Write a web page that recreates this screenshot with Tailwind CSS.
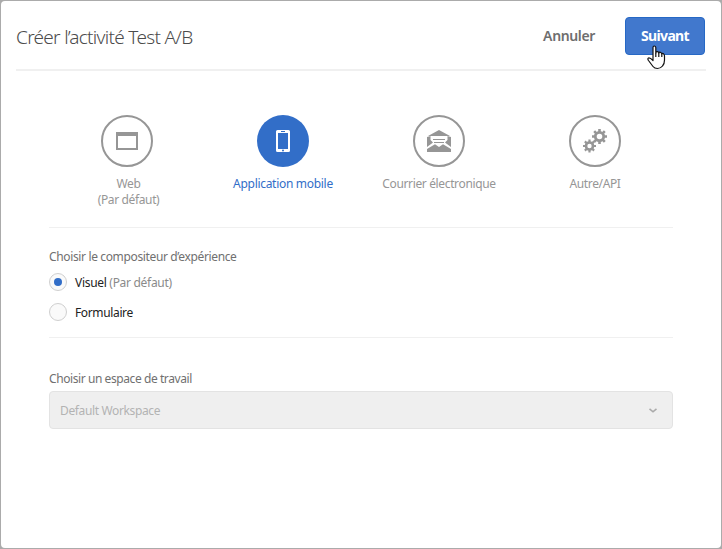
<!DOCTYPE html>
<html lang="fr">
<head>
<meta charset="utf-8">
<title>Créer l’activité Test A/B</title>
<script src="https://cdn.jsdelivr.net/npm/@tailwindcss/browser@4"></script>
</head>
<body class="h-[549px] w-[722px] overflow-hidden bg-[#ababab] p-px font-['Noto_Sans','Open_Sans',sans-serif] text-[12px] leading-4 tracking-[-0.36px] text-[#707070]">
<main class="relative h-[547px] w-[720px] rounded-[4px] bg-white">
  <header class="ml-[15px] flex h-[70px] w-[690px] items-center border-b-2 border-[#f0f0f0]">
    <h1 class="mt-[3px] text-[19px] leading-6 font-light tracking-[-0.7px] whitespace-nowrap text-[#4b4b4b]">Créer l’activité Test A/B</h1>
    <button class="mt-[2px] mr-[30px] ml-auto text-[14px] font-semibold text-[#6e6e6e]">Annuler</button>
    <button class="mt-[2px] mr-[1px] h-[38px] w-[80px] rounded-[4px] border border-[#2668c5] bg-[#4178cd] text-[14px] font-bold tracking-[-0.65px] text-white">Suivant</button>
  </header>
  <section class="mx-12 grid h-[157px] grid-cols-4 border-b border-[#f0f0f0] pt-11 text-center text-[#969696]">
    <div class="flex flex-col items-center">
      <div class="flex size-[52px] items-center justify-center rounded-full border-2 border-[#969696]">
        <svg class="h-[18px] w-[22px]" viewBox="0 0 22 18" fill="none"><path d="M1 2V17H21V2" stroke="#969696" stroke-width="2"/><path d="M0 0H22V4H0Z" fill="#969696"/></svg>
      </div>
      <p class="mt-[9px] ml-[3px]">Web<br>(Par défaut)</p>
    </div>
    <div class="flex flex-col items-center text-[#326ec8]">
      <div class="flex size-[52px] items-center justify-center rounded-full bg-[#326ec8]">
        <svg class="h-[22px] w-[14px]" viewBox="0 0 14 22"><path fill="#fff" fill-rule="evenodd" d="M1.5 0H12.5Q14 0 14 1.5V20.5Q14 22 12.5 22H1.5Q0 22 0 20.5V1.5Q0 0 1.5 0ZM2 3V19H12V3ZM5 1V2H9V1ZM7 19.5A1 1 0 1 0 7 21.5A1 1 0 1 0 7 19.5Z"/></svg>
      </div>
      <p class="mt-[9px] tracking-[-0.3px]">Application mobile</p>
    </div>
    <div class="flex flex-col items-center">
      <div class="flex size-[52px] items-center justify-center rounded-full border-2 border-[#969696]">
        <svg class="h-[22px] w-[24px]" viewBox="0 0 24 22"><path fill="#969696" d="M12 0L23 6H1ZM0 7L3.5 6V10L6 12.5L0 17ZM24 7L20.500 6V10L18 12.500L24 17ZM0 22V19L8 14.300L12 17L16 14.300L24 19V22Z"/><path d="M6 9.500H18M7 12.500H17" stroke="#969696"/></svg>
      </div>
      <p class="mt-[9px] whitespace-nowrap">Courrier électronique</p>
    </div>
    <div class="flex flex-col items-center">
      <div class="flex size-[52px] items-center justify-center rounded-full border-2 border-[#969696]">
        <svg class="size-6" viewBox="0 0 24 24" fill="none" stroke="#969696"><circle cx="16.500" cy="7.500" r="4.200" stroke-width="2.800"/><path stroke-width="2.600" d="M16.500 0V3M16.500 12V15M9 7.500H12M21 7.500H24M11.200 2.200L13.300 4.300M19.700 10.700L21.800 12.800M21.800 2.200L19.700 4.300M13.300 10.700L11.200 12.800"/><circle cx="6.500" cy="17" r="3.500" stroke-width="2.600"/><path stroke-width="2.200" d="M6.500 10.500V13M6.500 21V23.500M0 17H3M10 17H13M1.900 12.400L3.700 14.200M9.300 19.800L11.100 21.600M11.100 12.400L9.300 14.200M3.700 19.800L1.900 21.600"/></svg>
      </div>
      <p class="mt-[9px]">Autre/API</p>
    </div>
  </section>
  <section class="mx-12 h-[110px] border-b border-[#f0f0f0] pt-[21px]">
    <h2>Choisir le compositeur d’expérience</h2>
    <label class="mt-2 flex h-[18px] items-center text-[#222]"><span class="mr-2 flex size-[18px] items-center justify-center rounded-full border border-[#cfcfcf] bg-[#fafafa]"><span class="size-2 rounded-full bg-[#326ec8]"></span></span><span class="pt-[2px] tracking-[-0.3px]">Visuel <span class="text-[#8a8a8a]">(Par défaut)</span></span></label>
    <label class="mt-3 flex h-[18px] items-center text-[#222]"><span class="mr-2 size-[18px] rounded-full border border-[#cfcfcf] bg-[#fafafa]"></span><span class="pt-[2px]">Formulaire</span></label>
  </section>
  <section class="mx-12 pt-[33px]">
    <h2 class="tracking-[-0.42px]">Choisir un espace de travail</h2>
    <div class="mt-1 flex h-[38px] items-center justify-between rounded-[4px] border border-[#e3e3e3] bg-[#efefef] pr-[15px] pl-[10px] text-[#b3b3b3]"><span class="pt-[2px]">Default Workspace</span><svg class="h-[5px] w-[8px]" viewBox="0 0 8 5" fill="none" stroke="#aaa" stroke-width="1.600"><path d="M.5 .8L4 3.800L7.500 .8"/></svg></div>
  </section>
  <svg class="absolute top-[44px] left-[646px] h-[25px] w-[19px]" viewBox="0 0 19 25"><path fill="#fff" stroke="#111" stroke-width="1.200" stroke-linejoin="round" d="M6 14V2.500Q6 1 7.300 1T8.800 2.500V8Q9 6.500 10.300 6.700T11.800 8Q12.300 7 13.400 7.300T14.800 8.800Q15.500 8 16.500 8.700T17.500 11V15Q17.500 19 15.500 21Q13.500 23.500 10.500 23.500Q7.500 23.500 6 21.500L1.500 15.500Q.3 13.500 1.500 13Q3 12.500 6 15.500Z"/><path d="M8.800 8V12M11.800 8V12M14.800 9V12" stroke="#111" stroke-width="1.200"/></svg>
</main>
</body>
</html>
